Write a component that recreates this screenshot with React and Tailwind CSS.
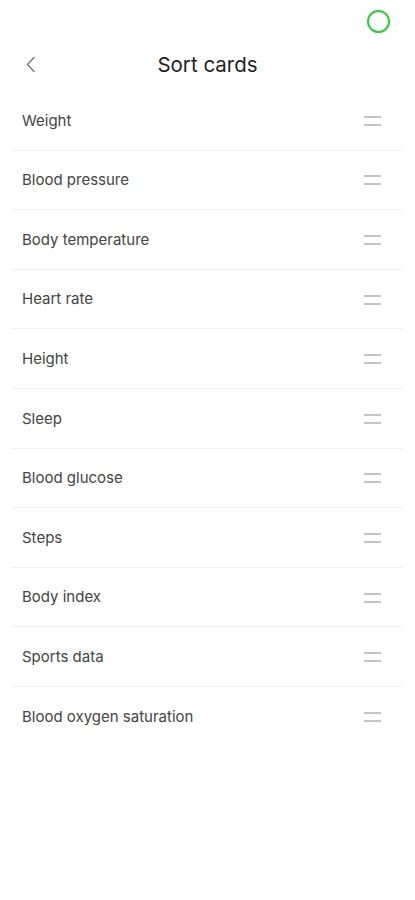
import React from "react";

const cards = [
  "Weight",
  "Blood pressure",
  "Body temperature",
  "Heart rate",
  "Height",
  "Sleep",
  "Blood glucose",
  "Steps",
  "Body index",
  "Sports data",
  "Blood oxygen saturation",
];

function Handle() {
  return (
    <div className="flex w-[17px] flex-col gap-[6px]">
      <span className="block h-[2px] bg-[#c4c4c4]" />
      <span className="block h-[2px] bg-[#c4c4c4]" />
    </div>
  );
}

export default function App() {
  return (
    <div
      className="min-h-[900px] w-[415px] bg-white"
      style={{ fontFamily: "Inter, 'Noto Sans', sans-serif" }}
    >
      {/* status bar */}
      <div className="flex h-[40px] items-end justify-end pr-[25px] pb-[7px]">
        <div className="h-[23px] w-[23px] rounded-full border-2 border-[#2fcc3a]" />
      </div>

      {/* header */}
      <div className="relative flex h-[51px] items-center justify-center pb-[1px]">
        <button className="absolute left-[22px] top-[12px] p-1">
          <svg width="10" height="17" viewBox="0 0 10 17" fill="none">
            <path
              d="M8 1.5 L1.5 8.5 L8 15.5"
              stroke="#777"
              strokeWidth="1.4"
              strokeLinecap="round"
              strokeLinejoin="round"
            />
          </svg>
        </button>
        <h1 className="text-[20.5px] font-normal text-[#222]">Sort cards</h1>
      </div>

      {/* list */}
      <ul className="mx-[12px]">
        {cards.map((name, i) => (
          <li
            key={name}
            className={
              "flex h-[59.6px] items-center justify-between pl-[10px] pr-[22px] pt-[1px] " +
              (i < cards.length - 1 ? "border-b border-[#f0f0f0]" : "")
            }
          >
            <span className="text-[15px] text-[#444]">{name}</span>
            <Handle />
          </li>
        ))}
      </ul>
    </div>
  );
}
